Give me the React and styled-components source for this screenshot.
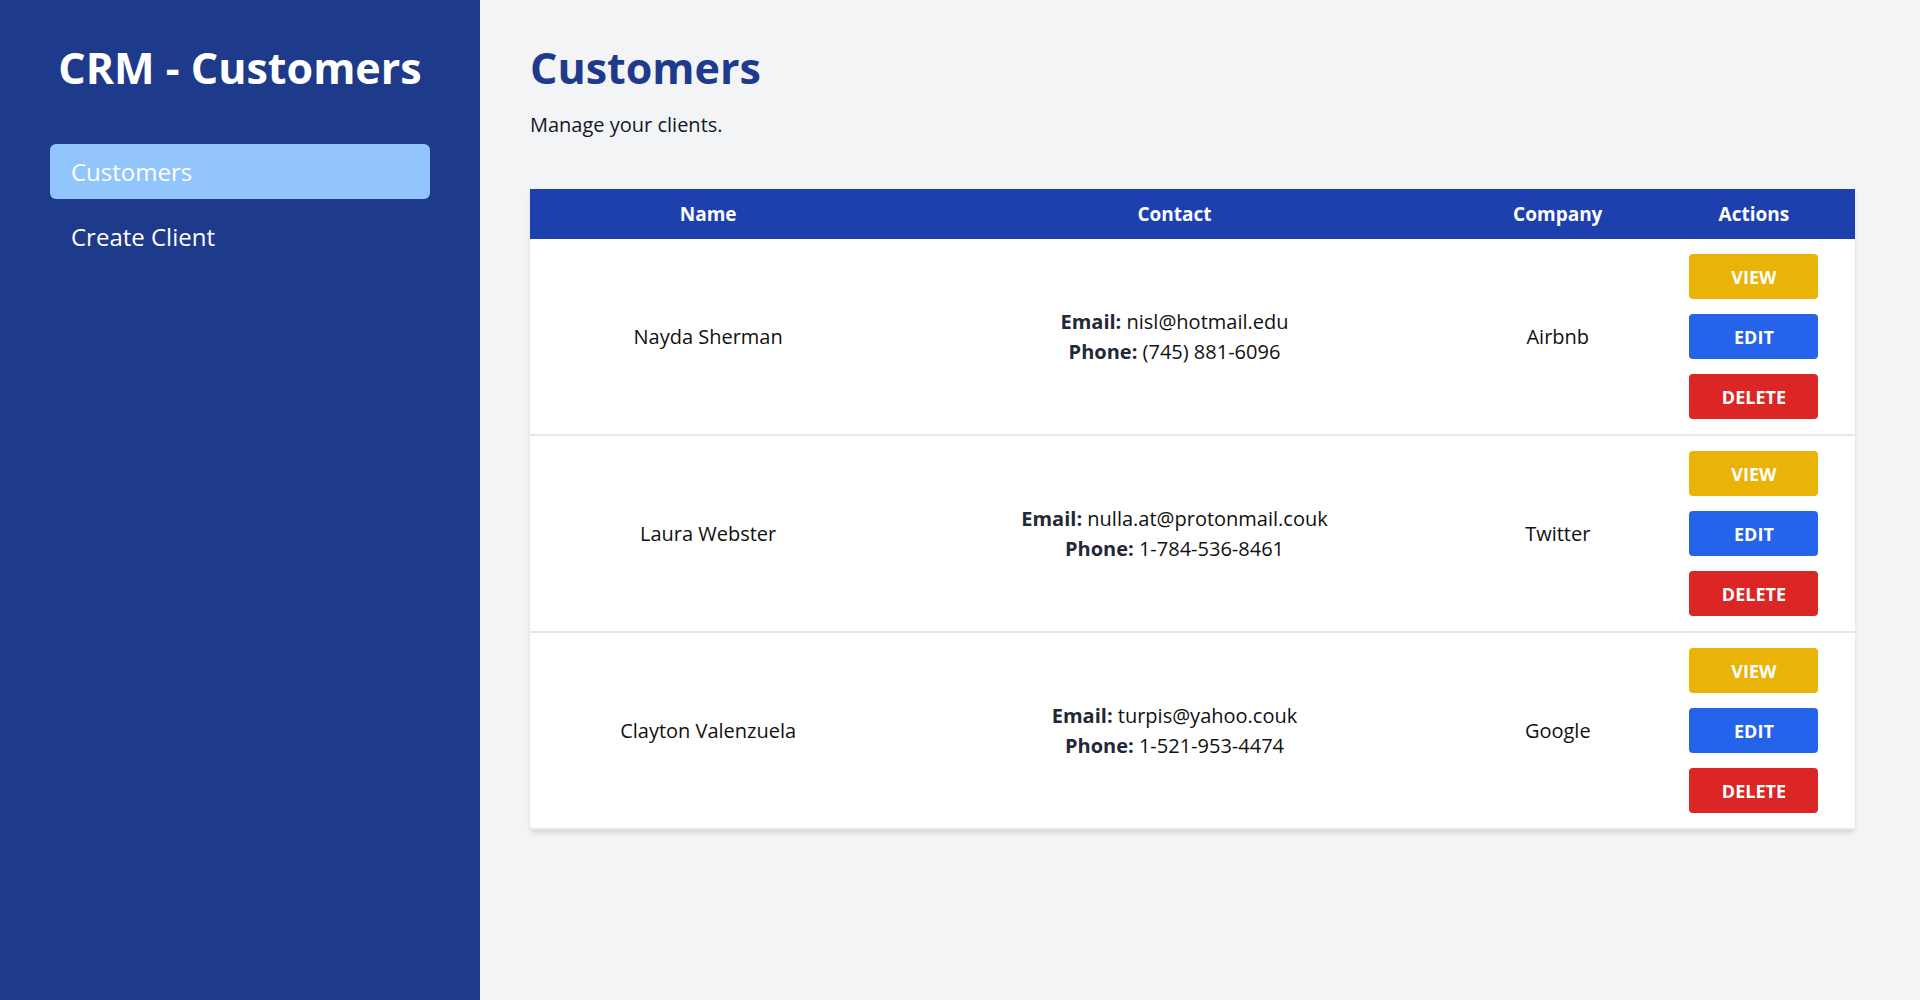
import React from "react";
import styled, { createGlobalStyle } from "styled-components";

const Global = createGlobalStyle`
  html, body { margin: 0; padding: 0; }
  body {
    font-family: "Open Sans", "Noto Sans", sans-serif;
    background: #f3f4f6;
    color: #111827;
  }
  * { box-sizing: border-box; }
`;

const Shell = styled.div`
  display: flex;
  min-height: 100vh;
`;

const Sidebar = styled.aside`
  width: 480px;
  flex-shrink: 0;
  background: #1e3a8a;
  padding: 40px 50px;
  display: flex;
  flex-direction: column;
`;

const Brand = styled.h1`
  margin: 0 0 49px;
  font-size: 43px;
  line-height: 55px;
  font-weight: 700;
  color: #ffffff;
  text-align: center;
`;

const Nav = styled.nav`
  display: flex;
  flex-direction: column;
  gap: 10px;
`;

const NavItem = styled.a`
  display: block;
  padding: 10px 21px;
  font-size: 24px;
  line-height: 35px;
  color: #ffffff;
  text-decoration: none;
  border-radius: 6px;
  background: ${(p) => (p.$active ? "#93c5fd" : "transparent")};
  cursor: pointer;
`;

const Main = styled.main`
  flex: 1;
  padding: 40px 65px 40px 50px;
`;

const Title = styled.h2`
  margin: 0 0 15px;
  font-size: 43px;
  line-height: 55px;
  font-weight: 700;
  color: #1e3a8a;
`;

const Subtitle = styled.p`
  margin: 0 0 49px;
  font-size: 20px;
  line-height: 30px;
  color: #111827;
`;

const Table = styled.div`
  background: #ffffff;
  box-shadow: 0 4px 6px -1px rgba(0, 0, 0, 0.1), 0 2px 4px -2px rgba(0, 0, 0, 0.1);
`;

const cols = "356fr 576fr 190fr 202fr";

const HeadRow = styled.div`
  display: grid;
  grid-template-columns: ${cols};
  height: 50px;
  background: #1e40af;
`;

const HeadCell = styled.div`
  display: flex;
  align-items: center;
  justify-content: center;
  color: #ffffff;
  font-weight: 700;
  font-size: 19px;
`;

const Row = styled.div`
  display: grid;
  grid-template-columns: ${cols};
  border-bottom: 2px solid #e5e7eb;
`;

const Cell = styled.div`
  display: flex;
  flex-direction: column;
  align-items: center;
  justify-content: center;
  text-align: center;
  font-size: 20px;
  line-height: 30px;
  color: #111111;
  padding: 15px 0;
  gap: ${(p) => (p.$actions ? "15px" : "0")};
`;

const Label = styled.span`
  font-weight: 700;
  color: #1f2937;
`;

const ActionButton = styled.button`
  width: 129px;
  height: 45px;
  border: none;
  border-radius: 4px;
  font-family: inherit;
  font-size: 18px;
  font-weight: 700;
  color: #ffffff;
  text-transform: uppercase;
  cursor: pointer;
  background: ${(p) =>
    p.$kind === "view" ? "#eab308" : p.$kind === "edit" ? "#2563eb" : "#dc2626"};
`;

const customers = [
  { name: "Nayda Sherman", email: "nisl@hotmail.edu", phone: "(745) 881-6096", company: "Airbnb" },
  { name: "Laura Webster", email: "nulla.at@protonmail.couk", phone: "1-784-536-8461", company: "Twitter" },
  { name: "Clayton Valenzuela", email: "turpis@yahoo.couk", phone: "1-521-953-4474", company: "Google" },
];

export default function App() {
  return (
    <>
      <Global />
      <Shell>
        <Sidebar>
          <Brand>CRM - Customers</Brand>
          <Nav>
            <NavItem $active>Customers</NavItem>
            <NavItem>Create Client</NavItem>
          </Nav>
        </Sidebar>
        <Main>
          <Title>Customers</Title>
          <Subtitle>Manage your clients.</Subtitle>
          <Table>
            <HeadRow>
              <HeadCell>Name</HeadCell>
              <HeadCell>Contact</HeadCell>
              <HeadCell>Company</HeadCell>
              <HeadCell>Actions</HeadCell>
            </HeadRow>
            {customers.map((c) => (
              <Row key={c.name}>
                <Cell>{c.name}</Cell>
                <Cell>
                  <div>
                    <Label>Email:</Label> {c.email}
                  </div>
                  <div>
                    <Label>Phone:</Label> {c.phone}
                  </div>
                </Cell>
                <Cell>{c.company}</Cell>
                <Cell $actions>
                  <ActionButton $kind="view">View</ActionButton>
                  <ActionButton $kind="edit">Edit</ActionButton>
                  <ActionButton $kind="delete">Delete</ActionButton>
                </Cell>
              </Row>
            ))}
          </Table>
        </Main>
      </Shell>
    </>
  );
}
